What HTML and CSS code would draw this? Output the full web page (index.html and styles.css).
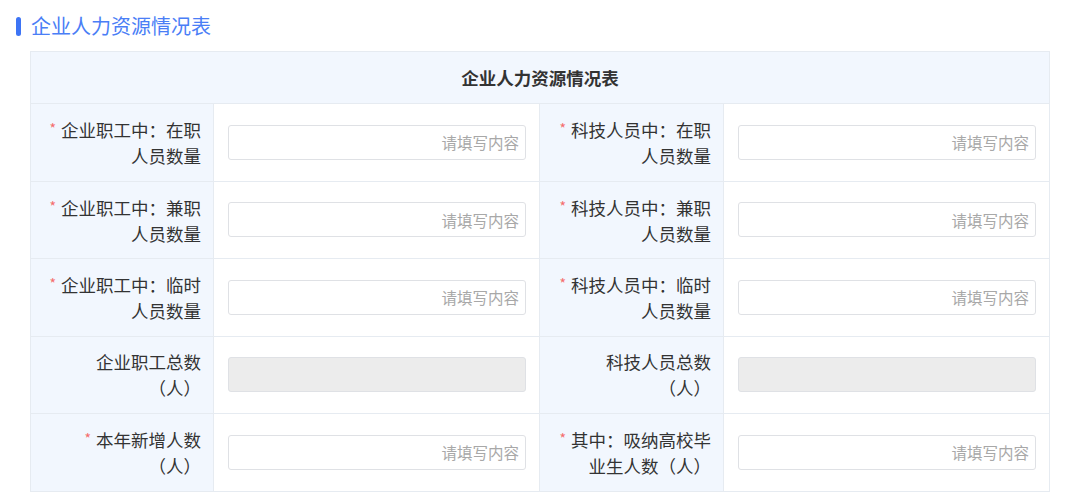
FILE: index.html
```html
<!DOCTYPE html>
<html lang="zh-CN">
<head>
    <meta charset="UTF-8">
    <title>企业人力资源情况表</title>
    <link rel="stylesheet" href="styles.css">
</head>
<body>
    <div class="section">
        <h2 class="section-title">企业人力资源情况表</h2>

        <table class="form-table">
            <colgroup>
                <col class="col-label first">
                <col class="col-input">
                <col class="col-label">
                <col class="col-input">
            </colgroup>
            <thead>
                <tr>
                    <th colspan="4">企业人力资源情况表</th>
                </tr>
            </thead>
            <tbody>
                <tr>
                    <td class="label"><span class="req">*</span>企业职工中：在职人员数量</td>
                    <td class="field"><input type="text" placeholder="请填写内容"></td>
                    <td class="label"><span class="req">*</span>科技人员中：在职人员数量</td>
                    <td class="field"><input type="text" placeholder="请填写内容"></td>
                </tr>
                <tr>
                    <td class="label"><span class="req">*</span>企业职工中：兼职人员数量</td>
                    <td class="field"><input type="text" placeholder="请填写内容"></td>
                    <td class="label"><span class="req">*</span>科技人员中：兼职人员数量</td>
                    <td class="field"><input type="text" placeholder="请填写内容"></td>
                </tr>
                <tr>
                    <td class="label"><span class="req">*</span>企业职工中：临时人员数量</td>
                    <td class="field"><input type="text" placeholder="请填写内容"></td>
                    <td class="label"><span class="req">*</span>科技人员中：临时人员数量</td>
                    <td class="field"><input type="text" placeholder="请填写内容"></td>
                </tr>
                <tr>
                    <td class="label">企业职工总数（人）</td>
                    <td class="field"><input type="text" disabled></td>
                    <td class="label">科技人员总数（人）</td>
                    <td class="field"><input type="text" disabled></td>
                </tr>
                <tr>
                    <td class="label"><span class="req">*</span>本年新增人数（人）</td>
                    <td class="field"><input type="text" placeholder="请填写内容"></td>
                    <td class="label"><span class="req">*</span>其中：吸纳高校毕业生人数（人）</td>
                    <td class="field"><input type="text" placeholder="请填写内容"></td>
                </tr>
            </tbody>
        </table>
    </div>
</body>
</html>
```

FILE: styles.css
```css
:root {
    --title-blue: #4a7ef6;
    --bar-blue: #3d74f5;
    --label-bg: #f2f7fe;
    --border: #e6ebf1;
    --text: #333;
    --placeholder: #a8a8a8;
    --required: #f56c6c;
}

* {
    margin: 0;
    padding: 0;
    box-sizing: border-box;
}

body {
    font-family: "Noto Sans CJK SC", "Noto Sans", sans-serif;
    color: var(--text);
    background-color: white;
}

.section {
    padding: 13px 30px 0 16px;
}

.section-title {
    display: flex;
    align-items: center;
    gap: 10px;
    font-size: 20px;
    font-weight: 400;
    line-height: 26px;
    color: var(--title-blue);
    margin-bottom: 12px;
}

.section-title::before {
    content: "";
    width: 5px;
    height: 19px;
    border-radius: 3px;
    background-color: var(--bar-blue);
}

.form-table {
    width: 1019px;
    margin-left: 14px;
    border-collapse: collapse;
    table-layout: fixed;
}

.col-label {
    width: 184px;
}

.col-label.first {
    width: 183px;
}

.col-input {
    width: 326px;
}

.form-table th,
.form-table td {
    border: 1px solid var(--border);
}

.form-table th {
    height: 52px;
    background-color: var(--label-bg);
    font-size: 17.5px;
    font-weight: 700;
    text-align: center;
}

.form-table td {
    height: 77.5px;
}

.label {
    background-color: var(--label-bg);
    text-align: right;
    font-size: 17.5px;
    line-height: 26px;
    padding: 0 12px 0 17px;
    text-spacing-trim: space-all;
}

.req {
    color: var(--required);
    font-size: 14px;
    margin-right: 5px;
    vertical-align: 3px;
}

.field {
    padding: 0 13px 0 14px;
}

.field input {
    display: block;
    width: 100%;
    height: 35px;
    border: 1px solid #dfe1e5;
    border-radius: 3px;
    padding: 0 6px;
    font-family: inherit;
    font-size: 15.5px;
    text-align: right;
    color: var(--text);
    background-color: white;
}

.field input::placeholder {
    color: var(--placeholder);
}

.field input:disabled {
    background-color: #ececec;
}
```
